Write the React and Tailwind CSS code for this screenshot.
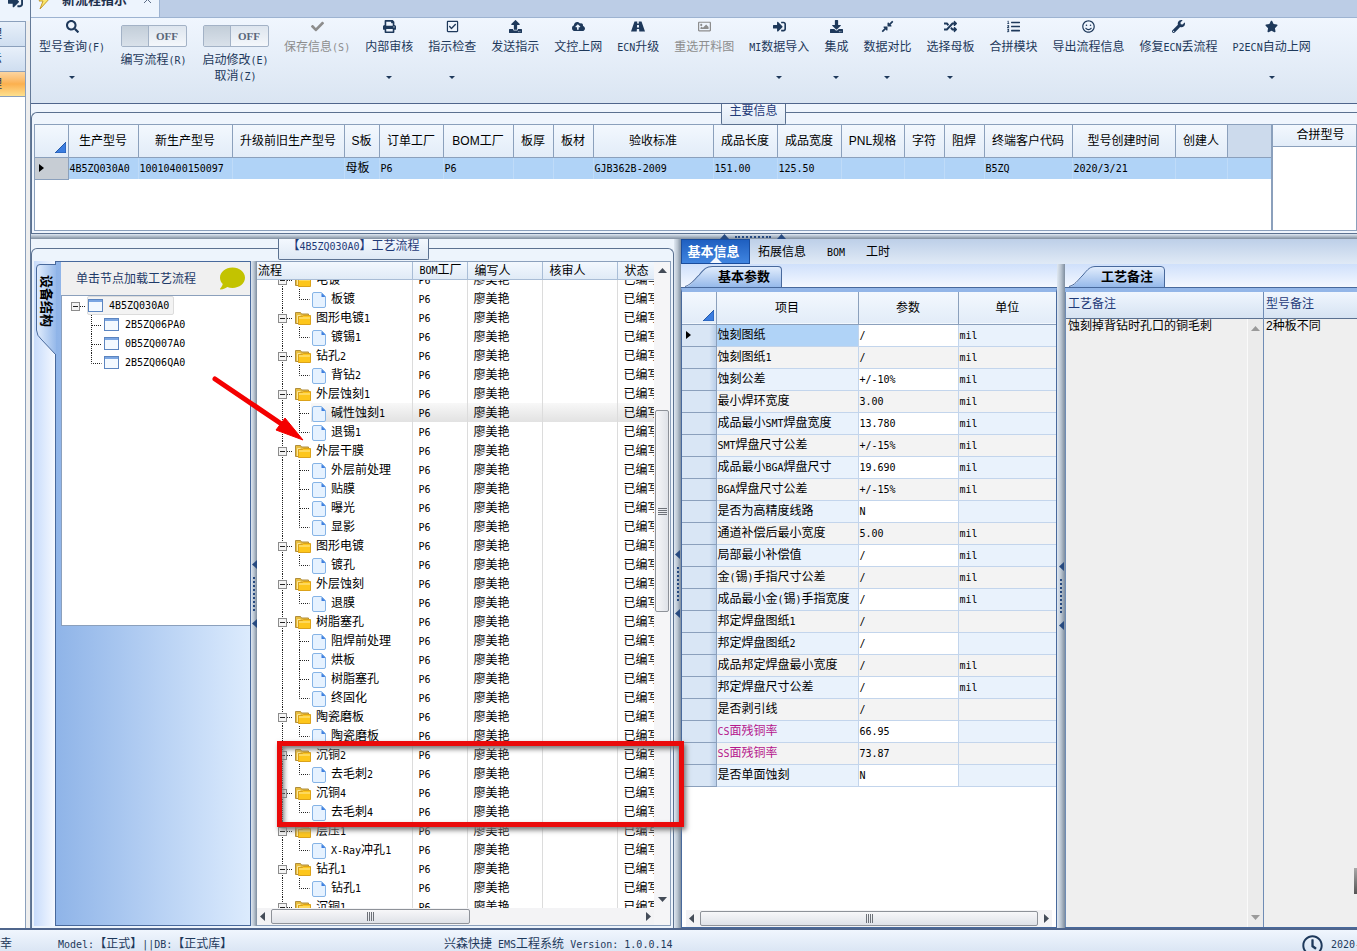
import {
  FaCheck,
  FaCloudUploadAlt,
  FaComment,
  FaCompressAlt,
  FaDownload,
  FaListOl,
  FaPrint,
  FaRandom,
  FaRegCheckSquare,
  FaRegClock,
  FaRegImage,
  FaRegSmile,
  FaSearch,
  FaSignInAlt,
  FaStar,
  FaUpload,
  FaWrench,
} from "react-icons/fa";

const RoadIcon = () => (
  <svg width="14" height="13" viewBox="0 0 14 13" aria-hidden="true">
    <path
      d="M3.500 1.500h2.800l-.2 2h1.800l-.2-2h2.800L14 11.500H8.300L8.100 9H5.900l-.2 2.500H0zM6.100 5l-.2 2.500h2.200L7.900 5z"
      fill="currentColor"
      fillRule="evenodd"
    />
  </svg>
);

const tools = [
  { label: "保存信息(S)", icon: FaCheck, disabled: true },
  { label: "内部审核", icon: FaPrint, menu: true },
  { label: "指示检查", icon: FaRegCheckSquare, menu: true },
  { label: "发送指示", icon: FaUpload },
  { label: "文控上网", icon: FaCloudUploadAlt },
  { label: "ECN升级", icon: RoadIcon },
  { label: "重选开料图", icon: FaRegImage, disabled: true },
  { label: "MI数据导入", icon: FaSignInAlt, menu: true },
  { label: "集成", icon: FaDownload, menu: true },
  { label: "数据对比", icon: FaCompressAlt, menu: true },
  { label: "选择母板", icon: FaRandom, menu: true },
  { label: "合拼模块", icon: FaListOl },
  { label: "导出流程信息", icon: FaRegSmile },
  { label: "修复ECN丢流程", icon: FaWrench },
  { label: "P2ECN自动上网", icon: FaStar, menu: true },
];

const mainColumns = [
  { title: "生产型号", value: "4B5ZQ030A0", width: "w-[70px]" },
  { title: "新生产型号", value: "10010400150097", width: "w-[94px]" },
  { title: "升级前旧生产型号", value: "", width: "w-[112px]" },
  { title: "S板", value: "母板", width: "w-[35px]" },
  { title: "订单工厂", value: "P6", width: "w-[64px]" },
  { title: "BOM工厂", value: "P6", width: "w-[70px]" },
  { title: "板厚", value: "", width: "w-[40px]" },
  { title: "板材", value: "", width: "w-[40px]" },
  { title: "验收标准", value: "GJB362B-2009", width: "w-[120px]" },
  { title: "成品长度", value: "151.00", width: "w-[64px]" },
  { title: "成品宽度", value: "125.50", width: "w-[64px]" },
  { title: "PNL规格", value: "", width: "w-[63px]" },
  { title: "字符", value: "", width: "w-[40px]" },
  { title: "阻焊", value: "", width: "w-[40px]" },
  { title: "终端客户代码", value: "B5ZQ", width: "w-[88px]" },
  { title: "型号创建时间", value: "2020/3/21", width: "w-[103px]" },
  { title: "创建人", value: "", width: "w-[52px]" },
];

const processes = [
  { name: "电镀", steps: ["板镀"] },
  { name: "图形电镀1", steps: ["镀锡1"] },
  { name: "钻孔2", steps: ["背钻2"] },
  { name: "外层蚀刻1", steps: ["碱性蚀刻1", "退锡1"] },
  { name: "外层干膜", steps: ["外层前处理", "贴膜", "曝光", "显影"] },
  { name: "图形电镀", steps: ["镀孔"] },
  { name: "外层蚀刻", steps: ["退膜"] },
  { name: "树脂塞孔", steps: ["阻焊前处理", "烘板", "树脂塞孔", "终固化"] },
  { name: "陶瓷磨板", steps: ["陶瓷磨板"] },
  { name: "沉铜2", steps: ["去毛刺2"] },
  { name: "沉铜4", steps: ["去毛刺4"] },
  { name: "层压1", steps: ["X-Ray冲孔1"] },
  { name: "钻孔1", steps: ["钻孔1"] },
  { name: "沉铜1", steps: [] },
];

const treeRows = processes.flatMap((p) => [
  { name: p.name, group: true },
  ...p.steps.map((s, i) => ({ name: s, last: i === p.steps.length - 1 })),
]);

const params = [
  ["蚀刻图纸", "/", "mil"],
  ["蚀刻图纸1", "/", "mil"],
  ["蚀刻公差", "+/-10%", "mil"],
  ["最小焊环宽度", "3.00", "mil"],
  ["成品最小SMT焊盘宽度", "13.780", "mil"],
  ["SMT焊盘尺寸公差", "+/-15%", "mil"],
  ["成品最小BGA焊盘尺寸", "19.690", "mil"],
  ["BGA焊盘尺寸公差", "+/-15%", "mil"],
  ["是否为高精度线路", "N", ""],
  ["通道补偿后最小宽度", "5.00", "mil"],
  ["局部最小补偿值", "/", "mil"],
  ["金(锡)手指尺寸公差", "/", "mil"],
  ["成品最小金(锡)手指宽度", "/", "mil"],
  ["邦定焊盘图纸1", "/", ""],
  ["邦定焊盘图纸2", "/", ""],
  ["成品邦定焊盘最小宽度", "/", "mil"],
  ["邦定焊盘尺寸公差", "/", "mil"],
  ["是否剥引线", "/", ""],
  ["CS面残铜率", "66.95", ""],
  ["SS面残铜率", "73.87", ""],
  ["是否单面蚀刻", "N", ""],
];

// Latin runs take half the width of a Chinese character
const Mixed = ({ children }) =>
  children.split(/([\x20-\x7e]+)/).map((part, i) =>
    i % 2 ? (
      <span
        key={i}
        className="whitespace-pre font-['DejaVu_Sans_Mono',monospace] text-[10px]"
      >
        {part}
      </span>
    ) : (
      part
    )
  );

const Arrow = ({ dir = "down", className = "text-[#444c58]" }) => {
  const points = {
    up: "0,5 9,5 4.5,0",
    down: "0,0 9,0 4.5,5",
    left: "5,0 5,9 0,4.5",
    right: "0,0 0,9 5,4.5",
  };
  const wide = dir === "up" || dir === "down";
  return (
    <svg
      width={wide ? 9 : 5}
      height={wide ? 5 : 9}
      className={`shrink-0 ${className}`}
      aria-hidden="true"
    >
      <polygon points={points[dir]} fill="currentColor" />
    </svg>
  );
};

const MenuCaret = () => (
  <svg width="6" height="3" className="mt-[21px]" aria-hidden="true">
    <path d="M0 0h6L3 3z" fill="#1e395b" />
  </svg>
);

const ToolButton = ({ label, icon: Icon, menu, disabled }) => (
  <button
    type="button"
    disabled={disabled}
    className={`flex shrink-0 flex-col items-center whitespace-nowrap text-xs ${
      disabled ? "text-[#8d8d8d]" : "text-[#1e395b]"
    }`}
  >
    <Icon size={13} />
    <span className="mt-[6px] h-4 leading-4">
      <Mixed>{label}</Mixed>
    </span>
    {menu && <MenuCaret />}
  </button>
);

const ToggleTool = ({ label, extra }) => (
  <div className="flex w-[67px] shrink-0 flex-col items-center pt-[5px] text-xs whitespace-nowrap text-[#1e395b]">
    <label className="flex flex-col items-center">
      <input type="checkbox" className="sr-only" />
      <span className="flex h-[22px] w-[66px] rounded-xs border border-[#a3b2c6] bg-linear-to-b from-[#dde5ee] to-[#f4f7fb]">
        <span className="w-[27px] border-r border-[#a3b2c6] bg-linear-to-b from-[#c3ced9] to-[#d9e1ea]" />
        <span className="flex-1 text-center font-['Liberation_Serif',serif] text-[11px] leading-5 font-bold text-[#59667a]">
          OFF
        </span>
      </span>
      <span className="mt-[5px] h-4 leading-4">
        <Mixed>{label}</Mixed>
      </span>
    </label>
    {extra && (
      <button type="button" className="leading-4">
        <Mixed>{extra}</Mixed>
      </button>
    )}
  </div>
);

const Splitter = ({ className = "w-[7px]" }) => (
  <div
    className={`flex shrink-0 flex-col items-center justify-center gap-[8px] bg-linear-to-r from-[#dfe8f2] via-[#b9c4d0] to-[#7f8e9f] ${className}`}
  >
    <Arrow dir="left" className="text-[#274a80]" />
    <span className="h-[34px] border-l-2 border-dotted border-[#274a80]" />
    <Arrow dir="left" className="text-[#274a80]" />
  </div>
);

const Caption = ({ children, className }) => (
  <span
    className={`absolute top-0 flex h-[21px] justify-center rounded-b-xs border border-t-0 border-[#5b7190] bg-linear-to-b from-[#f3f8fe] to-[#dfe9f5] text-xs leading-[15px] whitespace-nowrap text-[#1f3a78] ${className}`}
  >
    <span>
      <Mixed>{children}</Mixed>
    </span>
  </span>
);

const SelectAll = () => (
  <svg width="11" height="11" className="mr-[2px] ml-auto" aria-hidden="true">
    <path d="M11 0v11H0z" fill="#3b7de0" stroke="#2459a8" />
  </svg>
);

const RowMark = () => (
  <svg width="5" height="8" className="ml-[4px]" aria-hidden="true">
    <path d="M0 0l5 4-5 4z" fill="#000" />
  </svg>
);

const Expander = ({ x, y }) => (
  <>
    <rect x={x + 0.5} y={y + 0.5} width="8" height="8" fill="#f4f4f4" stroke="#8c8c8c" />
    <path d={`M${x + 2} ${y + 4.5}h5`} stroke="#222" />
  </>
);

const TreeGuide = ({ group, last }) => (
  <svg width={group ? 38 : 54} height="19" className="shrink-0 bg-white" aria-hidden="true">
    <path d="M25.5 0v19" stroke="#222" strokeDasharray="1 1" />
    {group ? (
      <>
        <path d="M30 10.5h5" stroke="#222" strokeDasharray="1 1" />
        <Expander x={21} y={6} />
      </>
    ) : (
      <path
        d={last ? "M42.5 0v10.5h10" : "M42.5 0v19M43 10.5h10"}
        fill="none"
        stroke="#222"
        strokeDasharray="1 1"
      />
    )}
  </svg>
);

const FolderIcon = () => (
  <svg width="16" height="13" className="mt-[2px] shrink-0" aria-hidden="true">
    <path d="M.5 11.500V.500h5l1 1.500h7v4H5v5.500z" fill="#e8bd3e" stroke="#b08d3a" />
    <path d="M2.500 11V3.500h3" fill="none" stroke="#fbe79c" />
    <path d="M3.500 4.500h4l1-1h7v9h-12z" fill="#fdc61c" stroke="#dba21a" />
    <path d="M4 6h11" stroke="#ffec9c" />
  </svg>
);

const FileIcon = () => (
  <svg width="15" height="16" className="mt-[2px] shrink-0" aria-hidden="true">
    <path
      d="M3 .5h7.500l4 4V14a1.500 1.500 0 0 1-1.500 1.500H3A1.500 1.500 0 0 1 1.500 14V2A1.500 1.500 0 0 1 3 .5z"
      fill="#e6f2ff"
      stroke="#86b4e6"
    />
    <path d="M10.500 1l4 4h-4z" fill="#3d7fe0" />
  </svg>
);

const WindowIcon = () => (
  <svg width="15" height="13" className="shrink-0" aria-hidden="true">
    <rect x=".5" y=".5" width="14" height="12" fill="#f3f9ff" stroke="#5c85c0" />
    <path d="M1 2h13" stroke="#7ba6e2" strokeWidth="2" />
  </svg>
);

const HScroll = ({ thumb }) => (
  <div className="flex h-[17px] shrink-0 items-center gap-[6px] bg-[#f3f3f5] px-[3px]">
    <Arrow dir="left" />
    <div className="flex flex-1">
      <div
        className={`flex h-[15px] items-center justify-center gap-px rounded-xs border border-[#8e9299] bg-linear-to-b from-[#f7f7f9] to-[#dfe2e8] ${thumb}`}
      >
        {[0, 1, 2, 3].map((n) => (
          <span key={n} className="h-[9px] w-px bg-[#6d7178]" />
        ))}
      </div>
    </div>
    <Arrow dir="right" />
  </div>
);

const SlantTab = ({ children, className }) => (
  <div className="flex h-[24px] shrink-0 items-end border-b border-[#48699c] bg-linear-to-b from-[#cfe0fb] to-[#f4f8ff] pl-[4px]">
    <button
      type="button"
      className={`relative h-[21px] text-right text-[13px] leading-5 font-bold text-black ${className}`}
    >
      <svg
        viewBox="0 0 96 21"
        preserveAspectRatio="none"
        className="absolute inset-0 size-full"
        aria-hidden="true"
      >
        <defs>
          <linearGradient id="slant" x1="0" y1="0" x2="0" y2="1">
            <stop offset="0" stopColor="#e3eefd" />
            <stop offset="1" stopColor="#96b9ea" />
          </linearGradient>
        </defs>
        <path
          d="M0 21C6 20 8 16 14 9 19 3 21 .5 27 .5H92q3.500 0 3.500 3.500V21z"
          fill="url(#slant)"
        />
        <path
          d="M0 20.500C6 19 8 15 14 9 19 3 21 .5 27 .5H92q3.500 0 3.500 3.500V21"
          fill="none"
          stroke="#48699c"
        />
      </svg>
      <span className="relative">{children}</span>
    </button>
  </div>
);

const Sidebar = () => (
  <aside className="flex w-[31px] shrink-0 flex-col border-r border-[#647a98] bg-[#eeeeee]">
    <div className="flex h-[21px] shrink-0 items-start justify-center overflow-hidden bg-[#edf4fd] text-[#1e395b]">
      <FaSignInAlt size={15} className="-mt-[6px]" />
    </div>
    <nav className="mr-[4px] flex flex-1 flex-col border-t border-r border-[#8ba0bc] bg-white text-xs text-[#1e395b]">
      {["流程管理", "流程指示", "工艺管理"].map((item, i) => (
        <button
          key={item}
          type="button"
          className={`flex h-[25px] items-center justify-end overflow-hidden border-b border-[#8ba0bc] pr-[23px] whitespace-nowrap ${
            i === 2
              ? "bg-linear-to-b from-[#fcd5a0] via-[#fbb04e] to-[#fde08e]"
              : "bg-linear-to-b from-[#e8f0fa] to-[#cfdef0]"
          }`}
        >
          {item}
        </button>
      ))}
    </nav>
  </aside>
);

const Ribbon = () => (
  <header className="shrink-0">
    <div className="flex h-[18px] items-end overflow-hidden border-b border-[#9db3d1] bg-[#bccde6]">
      <div className="flex h-[35px] w-[129px] shrink-0 items-center border-r border-[#9db3d1] bg-[#edf4fd] pl-[7px]">
        <svg width="14" height="18" viewBox="0 0 14 18" aria-hidden="true">
          <path d="M7 0h6L9 6h4L2 18l3-8H1z" fill="#fbe76a" stroke="#c49a2a" />
        </svg>
        <button type="button" className="ml-[10px] text-[13px] font-bold text-[#1e2f4b]">
          新流程指示
        </button>
        <button type="button" aria-label="关闭" className="ml-[17px]">
          <svg width="7" height="7" aria-hidden="true">
            <path d="M0 0l7 7M7 0L0 7" stroke="#5b6c86" />
          </svg>
        </button>
      </div>
    </div>
    <div className="flex h-[85px] items-start gap-[15px] overflow-hidden bg-linear-to-b from-[#f0f6fe] to-[#dae5f2] pt-[2px] pl-[8px]">
      <ToolButton label="型号查询(F)" icon={FaSearch} menu />
      <ToggleTool label="编写流程(R)" />
      <ToggleTool label="启动修改(E)" extra="取消(Z)" />
      {tools.map((tool) => (
        <ToolButton key={tool.label} {...tool} />
      ))}
    </div>
  </header>
);

const MainInfo = () => (
  <section className="relative shrink-0 border-t border-[#4f658c] bg-[#eff5fd] pt-[8px]">
    <div className="rounded-tl-md border-t border-l border-b border-[#5b7190] pt-[11px] pb-[2px] pl-[2px]">
      <div className="flex h-[107px] border border-[#8ba0bc] bg-white">
        <div className="min-w-0 flex-1 overflow-hidden">
          <table className="w-full table-fixed border-collapse text-xs whitespace-nowrap">
            <thead>
              <tr className="h-[32px] bg-linear-to-b from-[#f3f8fe] to-[#e2ecf8]">
                <th className="w-[33px] border-r border-b border-[#8ba0bc] pt-[14px] align-middle">
                  <SelectAll />
                </th>
                {mainColumns.map((c) => (
                  <th
                    key={c.title}
                    className={`border-r border-b border-[#8ba0bc] font-normal ${c.width}`}
                  >
                    {c.title}
                  </th>
                ))}
                <th className="border-b border-[#8ba0bc] bg-[#ccdaec]" />
              </tr>
            </thead>
            <tbody>
              <tr className="h-[22px] bg-[#b0d3f7]">
                <td className="border-r border-b border-[#8ba0bc] bg-[#c7cdd4]">
                  <RowMark />
                </td>
                {mainColumns.map((c) => (
                  <td key={c.title} className="border-r border-[#bfdbf8] pl-px">
                    <Mixed>{c.value}</Mixed>
                  </td>
                ))}
                <td />
              </tr>
            </tbody>
          </table>
        </div>
        <table className="h-[21px] w-[85px] table-fixed border-collapse text-xs">
          <thead>
            <tr className="h-[21px] bg-linear-to-b from-[#f3f8fe] to-[#e2ecf8]">
              <th className="border-b border-l-2 border-[#8ba0bc] pl-[12px] font-normal whitespace-nowrap">
                合拼型号
              </th>
            </tr>
          </thead>
          <tbody>
            <tr className="h-[84px]">
              <td className="border-l-2 border-[#8ba0bc]" />
            </tr>
          </tbody>
        </table>
      </div>
    </div>
    <Caption className="left-[690px] w-[65px]">主要信息</Caption>
  </section>
);

const DevicePanel = () => (
  <div className="flex w-[217px] shrink-0">
    <div className="w-[21px] shrink-0 bg-linear-to-r from-[#c8dcfb] to-[#f4f8ff] pt-[3px]">
      <button
        type="button"
        className="relative ml-[2px] flex h-[92px] w-[20px] items-start justify-center pt-[11px] text-[13px] font-bold text-black"
      >
        <svg
          viewBox="0 0 20 92"
          className="absolute inset-0 size-full"
          aria-hidden="true"
        >
          <defs>
            <linearGradient id="side-tab">
              <stop offset="0" stopColor="#e3eefd" />
              <stop offset="1" stopColor="#96b9ea" />
            </linearGradient>
          </defs>
          <path
            d="M20 .5H4Q.5 .5 .5 4V66Q1 72 5 75L20 91"
            fill="url(#side-tab)"
            stroke="#48699c"
          />
        </svg>
        <span className="relative leading-4 [text-orientation:sideways] [writing-mode:vertical-rl]">
          设备结构
        </span>
      </button>
    </div>
    <div className="flex min-w-0 flex-1 flex-col border border-[#48699c] bg-linear-to-r from-[#8fb4e8] to-[#dcebfd] pl-[5px]">
      <div className="flex h-[34px] shrink-0 items-center justify-between border-b border-[#8ba0bc] bg-[#f0f0f0] pr-[5px] pl-[15px] text-xs text-[#1f3a68]">
        单击节点加载工艺流程
        <FaComment size={25} className="text-[#c3c300]" />
      </div>
      <ul className="h-[330px] border-b border-l border-[#8ba0bc] bg-white text-xs">
        <li className="flex h-[19px] items-center">
          <svg width="25" height="19" aria-hidden="true">
            <path d="M18 10.500h6" stroke="#222" strokeDasharray="1 1" />
            <Expander x={9} y={6} />
          </svg>
          <button
            type="button"
            className="flex h-[19px] items-center gap-[6px] rounded-xs border border-[#dcdcdc] bg-[#f3f3f3] pr-[4px]"
          >
            <WindowIcon />
            <Mixed>4B5ZQ030A0</Mixed>
          </button>
        </li>
        {["2B5ZQ06PA0", "0B5ZQ007A0", "2B5ZQ06QA0"].map((code, i) => (
          <li key={code} className="flex h-[19px] items-center">
            <svg width="42" height="19" aria-hidden="true">
              <path
                d={i === 2 ? "M29.500 0v10.500h10" : "M29.500 0v19M30 10.500h10"}
                fill="none"
                stroke="#222"
                strokeDasharray="1 1"
              />
            </svg>
            <button type="button" className="flex items-center gap-[6px]">
              <WindowIcon />
              <Mixed>{code}</Mixed>
            </button>
          </li>
        ))}
      </ul>
    </div>
  </div>
);

const ProcessColumns = () => (
  <colgroup>
    <col className="w-[155px]" />
    <col className="w-[55px]" />
    <col className="w-[75px]" />
    <col className="w-[75px]" />
    <col />
  </colgroup>
);

const ProcessGrid = () => (
  <div className="flex min-w-0 flex-1 flex-col border-t border-r border-b border-[#8ba0bc] bg-white">
    <div className="flex min-h-0 flex-1">
      <div className="flex min-w-0 flex-1 flex-col">
        <div className="min-h-0 flex-1 overflow-hidden">
          <table className="w-full table-fixed border-collapse text-left text-xs whitespace-nowrap">
            <ProcessColumns />
            <thead>
              <tr className="h-[17px] bg-linear-to-b from-[#f3f8fe] to-[#dfeaf6] leading-4">
                {["流程", "BOM工厂", "编写人", "核审人", "状态"].map((h, i) => (
                  <th
                    key={h}
                    className={`overflow-hidden border-b border-[#a9bdd6] p-0 font-normal ${
                      i === 0 ? "pl-px" : "border-l pl-[7px]"
                    }`}
                  >
                    <Mixed>{h}</Mixed>
                  </th>
                ))}
              </tr>
            </thead>
          </table>
          {/* list is scrolled half a row down */}
          <div className="overflow-hidden">
            <table className="-mt-[10px] w-full table-fixed border-collapse text-xs whitespace-nowrap">
              <ProcessColumns />
              <tbody>
                {treeRows.map((row, i) => (
                  <tr
                    key={i}
                    className={`h-[19px] ${
                      row.name === "碱性蚀刻1"
                        ? "bg-linear-to-b from-[#f8f8f8] to-[#e2e2e2]"
                        : ""
                    }`}
                  >
                    <td className="p-0">
                      <div className="flex h-[19px] items-center">
                        <TreeGuide group={row.group} last={row.last} />
                        {row.group ? <FolderIcon /> : <FileIcon />}
                        <span className="ml-[5px]">
                          <Mixed>{row.name}</Mixed>
                        </span>
                      </div>
                    </td>
                    <td className="border-l border-[#dcdcdc] p-0 pl-[6px]">
                      <Mixed>P6</Mixed>
                    </td>
                    <td className="border-l border-[#dcdcdc] p-0 pl-[6px]">廖美艳</td>
                    <td className="border-l border-[#dcdcdc] p-0" />
                    <td className="overflow-hidden border-l border-[#dcdcdc] p-0 pl-[6px]">
                      已编写
                    </td>
                  </tr>
                ))}
              </tbody>
            </table>
          </div>
        </div>
        <HScroll thumb="w-[199px]" />
      </div>
      <div className="flex w-[16px] shrink-0 flex-col items-center bg-[#f5f5f7] pt-[6px] pb-[23px]">
        <Arrow dir="up" />
        <div className="mt-[137px] flex h-[202px] w-[14px] flex-col items-center justify-center gap-px rounded-xs border border-[#8e9299] bg-linear-to-r from-[#f7f7f9] to-[#dfe2e8]">
          {[0, 1, 2, 3].map((n) => (
            <span key={n} className="h-px w-[9px] bg-[#6d7178]" />
          ))}
        </div>
        <div className="mt-auto">
          <Arrow dir="down" />
        </div>
      </div>
    </div>
  </div>
);

const ParamPanel = () => (
  <div className="flex w-[376px] shrink-0 flex-col">
    <SlantTab className="w-[97px] pr-[12px]">基本参数</SlantTab>
    <div className="flex min-h-0 flex-1 flex-col border border-t-4 border-[#48699c] border-t-[#93b6e8] bg-white">
      <div className="min-h-0 flex-1 overflow-hidden">
        <table className="w-full table-fixed border-collapse text-xs whitespace-nowrap">
          <thead>
            <tr className="h-[32px] border-b border-[#8ba0bc] bg-linear-to-b from-[#f3f8fe] to-[#e2ecf8]">
              <th className="w-[34px] border-r border-[#8ba0bc] p-0 pt-[16px]">
                <SelectAll />
              </th>
              <th className="w-[142px] border-r border-[#8ba0bc] font-normal">项目</th>
              <th className="w-[100px] border-r border-[#8ba0bc] font-normal">参数</th>
              <th className="font-normal">单位</th>
            </tr>
          </thead>
          <tbody>
            {params.map(([name, value, unit], i) => (
              <tr
                key={name}
                className={`h-[22px] border-b border-[#c3d5ec] ${
                  i % 2 ? "bg-[#f3f3f3]" : "bg-[#e9f2fc]"
                }`}
              >
                <td className="border-r border-b border-[#8ba0bc] bg-linear-to-r from-[#d9e6f5] from-80% to-[#b9cee8] p-0">
                  {i === 0 && <RowMark />}
                </td>
                <td
                  className={`border-r border-[#c3d5ec] p-0 pl-px ${
                    i === 0 ? "bg-[#b0d3f7]" : ""
                  } ${name.includes("残铜率") ? "text-[#b5178c]" : "text-black"}`}
                >
                  <Mixed>{name}</Mixed>
                </td>
                <td
                  className={`border-r border-[#c3d5ec] p-0 pl-px ${
                    i % 2 ? "" : "bg-white"
                  }`}
                >
                  <Mixed>{value}</Mixed>
                </td>
                <td className="p-0 pl-px">
                  <Mixed>{unit}</Mixed>
                </td>
              </tr>
            ))}
          </tbody>
        </table>
      </div>
      <div className="px-[4px]">
        <HScroll thumb="w-full" />
      </div>
    </div>
  </div>
);

const NoteField = ({ id, label, text, scroll, className }) => (
  <div className={`flex flex-col border-l border-[#6f8cb5] ${className}`}>
    <label
      htmlFor={id}
      className="h-[27px] shrink-0 border-b border-[#5b7190] bg-linear-to-b from-[#f0f6fe] to-[#d6e3f2] pl-[2px] text-xs leading-[25px] text-[#1f3a78]"
    >
      {label}
    </label>
    <div className="flex min-h-0 flex-1 bg-[#efefef]">
      <textarea
        id={id}
        defaultValue={text}
        className="min-w-0 flex-1 resize-none overflow-hidden pl-[2px] text-xs leading-[14px] text-black outline-none"
      />
      {scroll && (
        <div className="flex w-[16px] flex-col items-center justify-between border-l border-[#fafafa] bg-[#ebebeb] py-[7px]">
          <Arrow dir="up" className="text-[#9a9a9a]" />
          <Arrow dir="down" className="text-[#9a9a9a]" />
        </div>
      )}
    </div>
  </div>
);

const NotesPanel = () => (
  <div className="flex min-w-0 flex-1 flex-col">
    <SlantTab className="w-[96px] pr-[12px]">工艺备注</SlantTab>
    <div className="flex min-h-0 flex-1 border-t-4 border-b border-b-[#48699c] border-t-[#93b6e8]">
      <NoteField
        id="process-note"
        label="工艺备注"
        text="蚀刻掉背钻时孔口的铜毛刺"
        scroll
        className="w-[198px] shrink-0"
      />
      <NoteField
        id="model-note"
        label="型号备注"
        text="2种板不同"
        className="min-w-0 flex-1"
      />
    </div>
  </div>
);

const DetailPanel = () => (
  <section className="flex min-w-0 flex-1 flex-col">
    <nav className="flex h-[25px] shrink-0 items-center bg-linear-to-b from-[#bdcfe8] to-[#e0eaf6] text-xs text-black">
      <button
        type="button"
        className="relative h-full w-[69px] border border-[#1a4c9c] bg-linear-to-b from-[#1f5fc0] to-[#4085e0] pr-[4px] text-[13px] font-bold text-white"
      >
        基本信息
        <svg width="12" height="6" className="absolute bottom-0 left-[28px]" aria-hidden="true">
          <path d="M0 6l6-6 6 6z" fill="#f4f8ff" />
        </svg>
      </button>
      <button type="button" className="ml-[8px]">
        拓展信息
      </button>
      <button type="button" className="ml-[21px]">
        <Mixed>BOM</Mixed>
      </button>
      <button type="button" className="ml-[21px]">
        工时
      </button>
    </nav>
    <div className="flex min-h-0 flex-1">
      <ParamPanel />
      <Splitter className="w-[8px]" />
      <NotesPanel />
    </div>
  </section>
);

const StatusBar = () => (
  <footer className="flex h-[23px] shrink-0 items-start overflow-hidden border-t-2 border-[#4f658c] bg-linear-to-b from-[#f0f6fe] to-[#dbe6f4] text-xs whitespace-nowrap text-[#1e395b]">
    <span className="mt-[6px] w-[58px] leading-4">幸</span>
    <span className="mt-[6px] w-[386px] leading-4">
      <Mixed>Model:【正式】||DB:【正式库】</Mixed>
    </span>
    <span className="mt-[6px] leading-4">
      <Mixed>兴森快捷 EMS工程系统 Version: 1.0.0.14</Mixed>
    </span>
    <FaRegClock size={21} className="mt-[5px] ml-auto shrink-0" />
    <span className="mt-[6px] ml-[8px] w-[26px] shrink-0 leading-4">
      <Mixed>2020-</Mixed>
    </span>
  </footer>
);

// Red arrow and frame drawn over the process list
const Annotations = () => (
  <div className="pointer-events-none absolute inset-0 z-20" aria-hidden="true">
    <svg width="94" height="68" className="absolute top-[375px] left-[211px]">
      <path d="M4 4L72 50" stroke="#f40000" strokeWidth="5" strokeLinecap="round" />
      <path d="M92 65L65 55 74 43z" fill="#f40000" stroke="#f40000" strokeLinejoin="round" />
    </svg>
    <div className="absolute top-[741px] left-[277px] h-[86px] w-[407px] border-[5px] border-[#ea0a0a] shadow-[2px_3px_5px_#777,inset_2px_3px_5px_#777]" />
    <div className="absolute top-[868px] right-0 h-[26px] w-[3px] bg-linear-to-b from-[#aaa] to-[#555]" />
  </div>
);

export default function App() {
  return (
    <div className="relative flex h-screen w-full flex-col overflow-hidden bg-white font-['Liberation_Sans','Noto_Sans_CJK_SC',sans-serif] text-black">
      <div className="flex min-h-0 flex-1">
        <Sidebar />
        <main className="flex min-w-0 flex-1 flex-col">
          <Ribbon />
          <MainInfo />
          <div className="flex h-[5px] shrink-0 items-center gap-[6px] bg-linear-to-b from-[#dfe8f2] to-[#7f8e9f] pl-[689px]">
            <Arrow dir="up" className="text-[#274a80]" />
            <span className="w-[36px] border-t-2 border-dotted border-[#274a80]" />
            <Arrow dir="up" className="text-[#274a80]" />
          </div>
          <div className="flex min-h-0 flex-1">
            <section className="relative flex w-[643px] shrink-0 flex-col bg-[#edf4fc] pt-[9px]">
              <div className="flex min-h-0 flex-1 rounded-t-md border border-b-0 border-[#5b7190] pt-[12px] pr-[2px] pb-[2px] pl-[2px]">
                <DevicePanel />
                <Splitter className="w-[6px]" />
                <ProcessGrid />
              </div>
              <Caption className="left-[247px] w-[151px]">【4B5ZQ030A0】工艺流程</Caption>
            </section>
            <Splitter />
            <DetailPanel />
          </div>
        </main>
      </div>
      <StatusBar />
      <Annotations />
    </div>
  );
}
